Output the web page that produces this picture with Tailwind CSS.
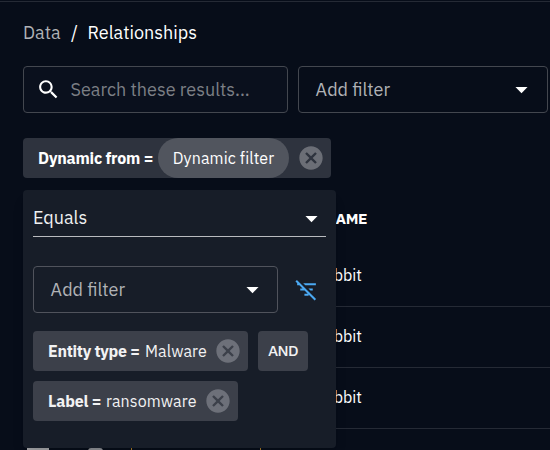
<!DOCTYPE html>
<html lang="en">
<head>
<meta charset="utf-8">
<title>Relationships</title>
<script src="https://cdn.jsdelivr.net/npm/@tailwindcss/browser@4"></script>
</head>
<body class="bg-[#070d19] text-white font-['IBM_Plex_Sans',Roboto,sans-serif] h-[450px] w-[550px] overflow-hidden">
<svg class="hidden">
  <symbol id="cancel" viewBox="0 0 24 24"><path d="M12 2C6.47 2 2 6.47 2 12s4.47 10 10 10 10-4.47 10-10S17.53 2 12 2m5 13.59L15.59 17 12 13.41 8.41 17 7 15.59 10.59 12 7 8.41 8.41 7 12 10.59 15.59 7 17 8.41 13.41 12z"/></symbol>
  <symbol id="drop" viewBox="0 0 24 24"><path d="m7 10 5 5 5-5z"/></symbol>
</svg>
<div class="relative h-[450px] border-t border-[#070d19]">
  <div class="absolute inset-x-0 top-0 h-px bg-[#252a35]"></div>
  <nav class="flex items-center h-6 mt-[19px] pl-[23px] text-[18px] whitespace-pre">
    <span class="w-[48px] text-[#b0b2b6]">Data</span><span class="w-[16.5px]">/</span><span>Relationships</span>
  </nav>
  <div class="flex gap-[10px] pl-[23px] mt-[22px]">
    <div class="flex items-center w-[265px] h-[47px] border border-[#43474f] rounded bg-[#0a101d] pl-[12px]">
      <svg class="size-[25px] fill-white" viewBox="0 0 24 24"><path d="M15.5 14h-.79l-.28-.27C15.41 12.59 16 11.11 16 9.5 16 5.91 13.09 3 9.5 3S3 5.91 3 9.5 5.91 16 9.5 16c1.61 0 3.09-.59 4.23-1.57l.27.28v.79l5 4.99L20.49 19zm-6 0C7.01 14 5 11.99 5 9.5S7.01 5 9.5 5 14 7.01 14 9.5 11.99 14 9.5 14"/></svg>
      <span class="ml-[9.5px] text-[18px] text-[#7c7f85] whitespace-nowrap">Search these results...</span>
    </div>
    <div class="flex items-center justify-between w-[250px] h-[47px] border border-[#43474f] rounded pl-[16.6px] pr-[11px]">
      <span class="text-[18px] text-[#b0b2b6]">Add filter</span>
      <svg class="size-[29px] fill-white"><use href="#drop"/></svg>
    </div>
  </div>
  <div class="flex items-center w-[308px] h-10 ml-[23px] mt-[25px] rounded bg-[#2e333e] whitespace-nowrap">
    <span class="w-[135px] pl-[15px] text-[16px] font-bold tracking-[-0.22px]">Dynamic from =</span>
    <span class="flex items-center justify-center w-[131px] h-10 rounded-full bg-[#51555e] text-[16px] tracking-[0.12px]">Dynamic filter</span>
    <svg class="size-7 ml-[7.5px] fill-[#6b6e76]"><use href="#cancel"/></svg>
  </div>
  <div class="mt-[12px] ml-[23px] text-[16px]">
    <div class="flex items-center h-[58px] w-[344px] justify-end font-bold text-[15.5px] tracking-[-0.4px]">NAME</div>
    <div class="flex items-center h-[59px] border-b border-[#252a35]"><span class="w-[339px] text-right pb-[4px]">Rabbit</span></div>
    <div class="flex items-center h-[61px] border-b border-[#252a35]"><span class="w-[339px] text-right pb-[3px]">Rabbit</span></div>
    <div class="flex items-center h-[61px] border-b border-[#252a35]"><span class="w-[339px] text-right pb-[3px]">Rabbit</span></div>
    <div class="flex items-start h-[21px] pt-[19px] pl-[4px]">
      <span class="w-[22px] h-[3px] bg-[#a5a6a9]"></span>
      <span class="ml-[39px] w-[15px] h-[3px] rounded-t-full bg-[#8f9196]"></span>
      <span class="ml-[28px] w-px h-[3px] bg-[#a77723]"></span>
      <span class="ml-[128px] w-px h-[3px] bg-[#a77723]"></span>
    </div>
  </div>
  <section class="absolute left-[23px] top-[189px] w-[313px] h-[258px] rounded bg-[#171d28] px-[10px] shadow-lg">
    <div class="flex items-center justify-between h-[47px] pt-[9px] border-b border-[#b9bbbf]">
      <span class="text-[18px] text-[#f0f1f2]">Equals</span>
      <svg class="size-[29px] mt-[2px] mr-[0.5px] fill-white"><use href="#drop"/></svg>
    </div>
    <div class="flex items-center mt-[29px]">
      <div class="flex items-center justify-between w-[245px] h-[47px] border border-[#50535c] rounded pl-[16.6px] pr-[10.5px]">
        <span class="text-[18px] text-[#b0b2b6]">Add filter</span>
        <svg class="size-[29px] fill-white"><use href="#drop"/></svg>
      </div>
      <svg class="size-[25px] ml-[16px] fill-[#4ba9f2]" viewBox="0 0 24 24"><path d="M10.83 8H21V6H8.83zm5 5H18v-2h-4.170zM14 16.830V18h-4v-2h3.170l-3-3H6v-2h2.170l-3-3H3V6h.170L1.390 4.220 2.800 2.810l18.380 18.380-1.410 1.410z"/></svg>
    </div>
    <div class="flex flex-wrap gap-[10px] mt-[18px] text-[16px] text-[#f2f2f3] whitespace-pre">
      <div class="flex items-center w-[215px] h-10 rounded bg-[#3c404a] pl-[15px]"><b class="w-[97px] tracking-[-0.28px]">Entity type =</b><span class="w-[68.5px] tracking-[0.12px]">Malware</span><svg class="size-7 fill-[#6d7079]"><use href="#cancel"/></svg></div>
      <div class="flex items-center justify-center w-[50px] h-10 rounded bg-[#3c404a] font-medium text-[15.5px] tracking-[-0.6px]">AND</div>
      <div class="flex items-center w-[205px] h-10 rounded bg-[#3c404a] pl-[15px]"><b class="w-[58px] tracking-[-0.2px]">Label =</b><span class="w-[97.5px] tracking-[0.12px]">ransomware</span><svg class="size-7 fill-[#6d7079]"><use href="#cancel"/></svg></div>
    </div>
  </section>
</div>
</body>
</html>
